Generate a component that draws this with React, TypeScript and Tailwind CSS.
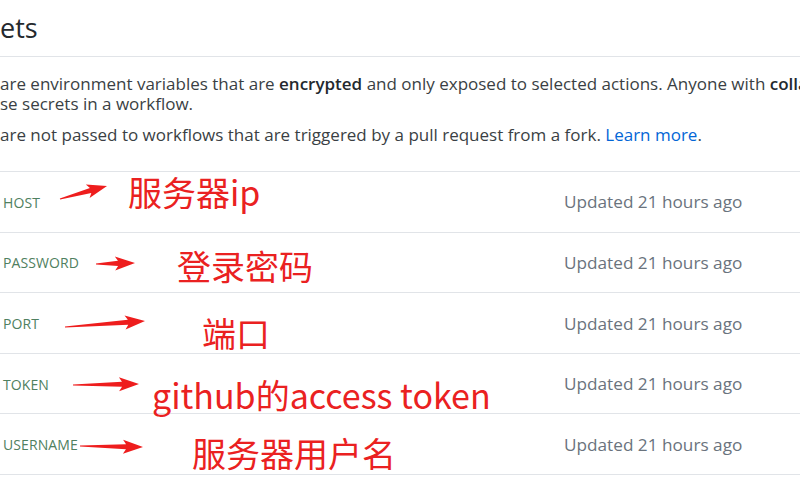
const secrets = [
  { name: "HOST", note: "服务器ip" },
  { name: "PASSWORD", note: "登录密码" },
  { name: "PORT", note: "端口" },
  { name: "TOKEN", note: "github的access token" },
  { name: "USERNAME", note: "服务器用户名" },
];

// red annotation labels drawn over the screenshot
const notes = [
  { text: "服务器ip", left: 128, top: 175 },
  { text: "登录密码", left: 177, top: 249 },
  { text: "端口", left: 202, top: 316 },
  { text: "github的access token", left: 152, top: 378 },
  { text: "服务器用户名", left: 192, top: 436 },
];

function Arrow({ x1, y1, x2, y2 }: { x1: number; y1: number; x2: number; y2: number }) {
  const dx = x2 - x1;
  const dy = y2 - y1;
  const len = Math.hypot(dx, dy);
  const ux = dx / len;
  const uy = dy / len;
  const nx = -uy;
  const ny = ux;
  const head = 17;
  const bx = x2 - ux * head;
  const by = y2 - uy * head;
  const pts = [
    [x1 + nx * 0.6, y1 + ny * 0.6],
    [bx + nx * 2.6, by + ny * 2.6],
    [bx - ux * 3 + nx * 7, by - uy * 3 + ny * 7],
    [x2, y2],
    [bx - ux * 3 - nx * 7, by - uy * 3 - ny * 7],
    [bx - nx * 2.6, by - ny * 2.6],
    [x1 - nx * 0.6, y1 - ny * 0.6],
  ]
    .map((p) => p.join(","))
    .join(" ");
  return <polygon points={pts} fill="#ee1d1d" />;
}

export default function App() {
  return (
    <div
      className="relative h-[500px] w-[800px] overflow-hidden bg-white text-[#24292e]"
      style={{ fontFamily: '"Open Sans", "Noto Sans", sans-serif' }}
    >
      <div className="flex h-[57px] items-center border-b border-[#e1e4e8] pb-[1px]">
        <h2 className="text-[27px] font-normal leading-none">ets</h2>
      </div>

      <div className="pt-[17px] text-[17px] leading-[20px] text-[#3a3f44]">
        <p className="whitespace-nowrap">
          are environment variables that are <b className="font-semibold text-[#24292e]">encrypted</b> and only
          exposed to selected actions. Anyone with <b className="font-semibold text-[#24292e]">collaborator</b>
        </p>
        <p className="whitespace-nowrap">se secrets in a workflow.</p>
        <p className="mt-[11px] whitespace-nowrap">
          are not passed to workflows that are triggered by a pull request from a fork.{" "}
          <span className="text-[#0366d6]">Learn more</span>.
        </p>
      </div>

      <ul className="mt-[26px] border-t border-[#e1e4e8]">
        {secrets.map((s) => (
          <li key={s.name} className="flex h-[60.6px] items-center border-b border-[#e1e4e8] pt-[1px]">
            <span className="w-[564px] pl-[3px] text-[14px] tracking-[0.1px] text-[#4f8060]">{s.name}</span>
            <span className="text-[17.2px] text-[#6a737d]">Updated 21 hours ago</span>
          </li>
        ))}
      </ul>

      {notes.map((n) => (
        <div
          key={n.text}
          className="absolute whitespace-nowrap text-[34px] leading-none text-[#ea2121]"
          style={{ left: n.left, top: n.top, fontFamily: '"Noto Sans CJK SC", sans-serif' }}
        >
          {n.text}
        </div>
      ))}

      <svg className="pointer-events-none absolute left-0 top-0" width="800" height="500">
        <Arrow x1={60} y1={199} x2={107} y2={186} />
        <Arrow x1={96} y1={264} x2={135} y2={263} />
        <Arrow x1={65} y1={327} x2={145} y2={321} />
        <Arrow x1={73} y1={385} x2={139} y2={384} />
        <Arrow x1={80} y1={446} x2={143} y2={447} />
      </svg>
    </div>
  );
}
